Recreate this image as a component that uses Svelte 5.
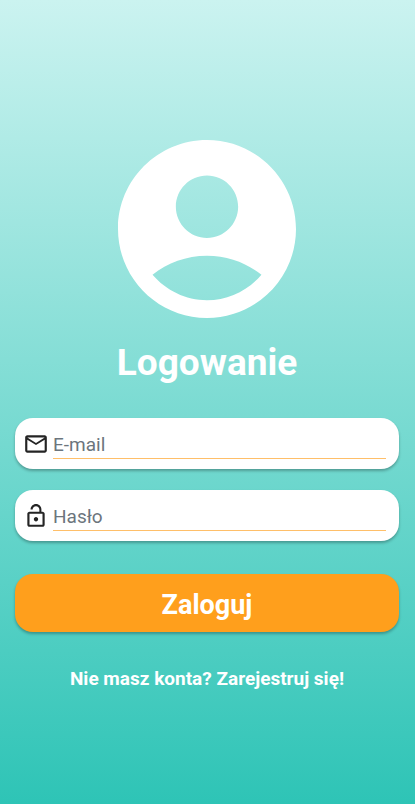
<script>
  let email = $state('');
  let password = $state('');
</script>

<main>
  <svg class="avatar" viewBox="2 2 20 20" aria-hidden="true">
    <path
      fill-rule="evenodd"
      d="M12 2C6.48 2 2 6.48 2 12s4.48 10 10 10 10-4.48 10-10S17.52 2 12 2zM12 6c1.93 0 3.5 1.57 3.5 3.5S13.93 13 12 13s-3.5-1.57-3.5-3.5S10.07 6 12 6zM12 20c-2.4 0-4.6-1.1-6.12-2.86C7.55 15.8 9.68 15 12 15s4.45.8 6.12 2.14C16.6 18.9 14.4 20 12 20z"
    />
  </svg>
  <h1>Logowanie</h1>

  <form onsubmit={(e) => e.preventDefault()}>
    <label class="field">
      <svg viewBox="0 0 24 24" aria-hidden="true">
        <path d="M22 6c0-1.1-.9-2-2-2H4c-1.1 0-2 .9-2 2v12c0 1.1.9 2 2 2h16c1.1 0 2-.9 2-2V6zm-2 0-8 5-8-5h16zm0 12H4V8l8 5 8-5v10z" />
      </svg>
      <input type="email" placeholder="E-mail" aria-label="E-mail" bind:value={email} />
    </label>
    <label class="field">
      <svg viewBox="0 0 24 24" aria-hidden="true">
        <path d="M12 17c1.1 0 2-.9 2-2s-.9-2-2-2-2 .9-2 2 .9 2 2 2zm6-9h-1V6c0-2.76-2.24-5-5-5S7 3.24 7 6h1.9c0-1.71 1.39-3.1 3.1-3.1s3.1 1.39 3.1 3.1v2H6c-1.1 0-2 .9-2 2v10c0 1.1.9 2 2 2h12c1.1 0 2-.9 2-2V10c0-1.1-.9-2-2-2zm0 12H6V10h12v10z" />
      </svg>
      <input type="password" placeholder="Hasło" aria-label="Hasło" bind:value={password} />
    </label>
    <button type="submit">Zaloguj</button>
  </form>

  <a href="#rejestracja">Nie masz konta? Zarejestruj się!</a>
</main>

<style>
  :global(body) {
    margin: 0;
  }

  main {
    box-sizing: border-box;
    min-height: 100vh;
    padding: 26px 16px 0 15px;
    display: flex;
    flex-direction: column;
    align-items: center;
    justify-content: center;
    background: linear-gradient(#cbf3f0, #2ec4b6);
    font-family: Roboto, sans-serif;
    color: #fff;
  }

  .avatar {
    width: 178px;
    height: 178px;
    fill: #fff;
  }

  h1 {
    margin: 23px 0 33px;
    font-size: 37px;
    line-height: 44px;
    font-weight: 700;
  }

  form {
    width: 100%;
    display: flex;
    flex-direction: column;
    gap: 21px;
  }

  .field {
    box-sizing: border-box;
    height: 51px;
    padding: 1px 13px 0 8px;
    display: flex;
    align-items: center;
    gap: 4px;
    border-radius: 18px;
    background: #fff;
    box-shadow: 0 2px 3px rgba(0, 0, 0, 0.28);
  }

  .field svg {
    flex: none;
    width: 26px;
    height: 26px;
    fill: #242424;
  }

  input {
    flex: 1;
    min-width: 0;
    box-sizing: border-box;
    height: 30px;
    padding: 1px 0 0;
    border: 0;
    border-bottom: 1px solid #ffbf69;
    outline: 0;
    background: none;
    font: 400 19px/24px Roboto, sans-serif;
    color: #242424;
  }

  input::placeholder {
    color: #6c757d;
    opacity: 1;
  }

  button {
    height: 58px;
    margin-top: 12px;
    padding: 3px 0 0;
    border: 0;
    border-radius: 18px;
    background: #ff9f1c;
    box-shadow: 0 2px 3px rgba(0, 0, 0, 0.28);
    font: 700 27px/32px Roboto, sans-serif;
    color: #fff;
    cursor: pointer;
  }

  a {
    margin-top: 36px;
    font-size: 19px;
    line-height: 22px;
    font-weight: 700;
    color: #fff;
    text-decoration: none;
  }
</style>
